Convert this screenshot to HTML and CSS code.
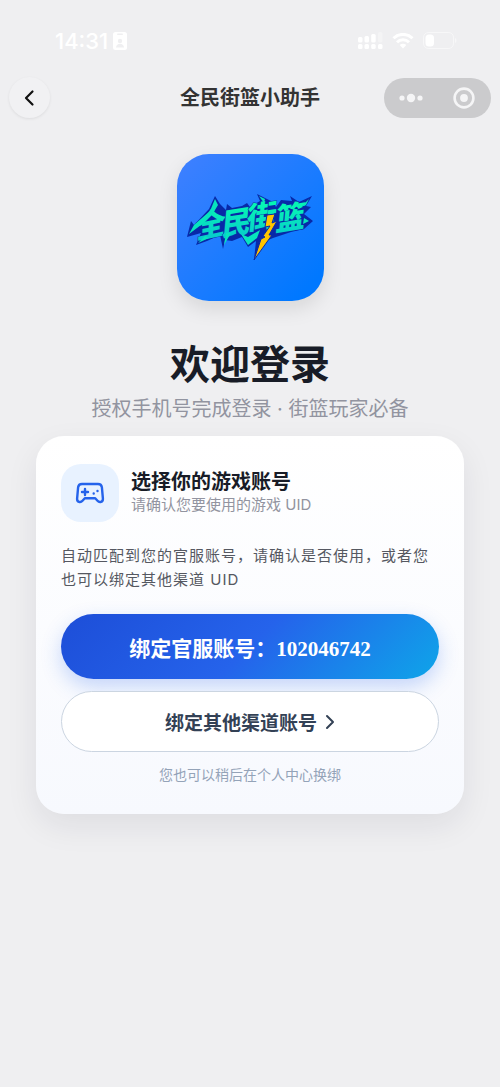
FILE: index.html
```html
<!DOCTYPE html>
<html lang="zh-CN">
<head>
    <meta charset="utf-8">
    <meta name="viewport" content="width=device-width, initial-scale=1">
    <title>全民街篮小助手</title>
    <link rel="stylesheet" href="styles.css">
</head>
<body>
    <div class="status">
        <div class="status-left">
            <span class="time">14:31</span>
            <svg width="14" height="18" viewBox="0 0 14 18">
                <rect width="14" height="18" rx="2.5" fill="#fff"/>
                <rect x="4" y="1.5" width="6" height="1.6" rx=".8" fill="#efeff1"/>
                <circle cx="7" cy="9" r="2.2" fill="#efeff1"/>
                <path d="M3 15.5c.3-5 7.700-5 8 0z" fill="#efeff1"/>
            </svg>
        </div>
        <div class="status-right">
            <svg width="25" height="17" viewBox="0 0 25 17" fill="#fff">
                <rect x="0" y="5" width="4.500" height="5.500" rx="1.500"/>
                <rect x="6.500" y="4" width="4.500" height="6.500" rx="1.500"/>
                <rect x="13.200" y="2" width="4.500" height="8.500" rx="1.500"/>
                <rect x="20" y="0" width="4.500" height="10.500" rx="1.500" opacity=".3"/>
                <rect x="0" y="12" width="4.500" height="5" rx="1.500"/>
                <rect x="6.500" y="12" width="4.500" height="5" rx="1.500"/>
                <rect x="13.200" y="12" width="4.500" height="5" rx="1.500"/>
                <rect x="20" y="12" width="4.500" height="5" rx="1.500"/>
            </svg>
            <svg width="22" height="16" viewBox="0 0 22 16" fill="none" stroke="#fff" stroke-width="3">
                <path d="M1.500 5.300a13.500 13.500 0 0 1 19 0"/>
                <path d="M5 9.200a8.500 8.500 0 0 1 12 0"/>
                <path d="M7.700 12.100a4.700 4.700 0 0 1 6.600 0L11 15.500z" fill="#fff" stroke="none"/>
            </svg>
            <svg width="34" height="17" viewBox="0 0 34 17">
                <rect x=".5" y=".5" width="30" height="16" rx="5" fill="none" stroke="#fff" stroke-opacity=".5"/>
                <rect x="2.500" y="2.500" width="8.500" height="12" rx="3.500" fill="#fff"/>
                <path d="M32 6c2 .7 2 4.300 0 5z" fill="#fff" opacity=".5"/>
            </svg>
        </div>
    </div>

    <header class="nav">
        <button class="back" type="button" aria-label="返回">
            <svg width="12" height="18" viewBox="0 0 12 18" fill="none" stroke="#111" stroke-width="2.200" stroke-linecap="round" stroke-linejoin="round">
                <path d="M8.500 2.500L2 9l6.500 6.500"/>
            </svg>
        </button>
        <h1 class="nav-title">全民街篮小助手</h1>
        <div class="capsule">
            <button type="button" aria-label="更多">
                <svg width="24" height="10" viewBox="0 0 24 10" fill="#f5f5f6">
                    <circle cx="3" cy="5" r="2.600"/>
                    <circle cx="12" cy="5" r="4.200"/>
                    <circle cx="21" cy="5" r="2.600"/>
                </svg>
            </button>
            <button type="button" aria-label="关闭">
                <svg width="22" height="22" viewBox="0 0 22 22">
                    <circle cx="11" cy="11" r="9.400" fill="none" stroke="#f5f5f6" stroke-width="2.600"/>
                    <circle cx="11" cy="11" r="3.900" fill="#f5f5f6"/>
                </svg>
            </button>
        </div>
    </header>

    <main class="page">
        <div class="logo">
            <svg viewBox="0 0 147 147" role="img" aria-label="全民街篮">
                <defs>
                    <linearGradient id="mint" x1="0" y1="0" x2="0" y2="1">
                        <stop offset=".2" stop-color="#06f5b4"/>
                        <stop offset="1" stop-color="#08c0d2"/>
                    </linearGradient>
                </defs>
                <!-- spiky shadow plate behind the name -->
                <path fill="#0829a8" d="M10 83L14 67L17 71L32 55L38 42L43 50L49 56L50 50L55 54L65 52L70 49L73 53L83 47L80 40L88 44L96 48L99 53L104 46L115 47L113 42L122 48L135 42L129 52L134 53L127 60L136 67L127 75L114 78L96 84L84 89L77 106L79 87L71 93L65 83L55 87L48 86L46 95L43 81L30 87L19 91L24 79Z"/>
                <text class="logo-text" x="19 44 69 98" y="85 82 76 77" rotate="-12 -9 -9 -9">全民街篮</text>
                <path fill="#07e5bd" d="M12 80L17 71L33 57L38 45L41 51L35 61L24 71ZM21 89L28 82L32 84ZM47 91L49 79L54 79ZM64 80L71 83L83 76L80 84L71 91ZM82 42L88 45L87 49ZM124 53L132 45L129 51ZM127 64L132 67L126 70Z"/>
                <path fill="#ffc400" stroke="#0829a8" stroke-width="1" d="M90 61L98 60L95 69L100 67L92 81L95 81L77 106L84 85L88 83L86 82L93 72L88 73Z"/>
            </svg>
        </div>
        <h2 class="welcome">欢迎登录</h2>
        <p class="slogan">授权手机号完成登录 · 街篮玩家必备</p>

        <section class="card">
            <div class="card-head">
                <div class="card-icon">
                    <svg width="30" height="24" viewBox="0 0 30 24" fill="none" stroke="#2563eb" stroke-width="2.400" stroke-linecap="round" stroke-linejoin="round">
                        <path d="M7 3h16c2.200 0 3.600 1.200 3.900 3.400l1 11.300c.2 3.200-3.400 4.300-5.400 2l-2.300-2.500H9.800l-2.300 2.500c-2 2.300-5.600 1.200-5.400-2l1-11.300C3.400 4.200 4.800 3 7 3z"/>
                        <path d="M10 8v6M7 11h6"/>
                        <path d="M18.700 12.500h.01M22.500 10h.01"/>
                    </svg>
                </div>
                <div>
                    <h3 class="card-title">选择你的游戏账号</h3>
                    <p class="card-sub">请确认您要使用的游戏 UID</p>
                </div>
            </div>
            <p class="desc">自动匹配到您的官服账号，请确认是否使用，或者您也可以绑定其他渠道 UID</p>
            <button class="btn btn-primary" type="button">绑定官服账号：<span class="uid">102046742</span></button>
            <button class="btn btn-plain" type="button">绑定其他渠道账号
                <svg width="10" height="16" viewBox="0 0 10 16" fill="none" stroke="#334155" stroke-width="2" stroke-linecap="round" stroke-linejoin="round">
                    <path d="M2 2l6 6-6 6"/>
                </svg>
            </button>
            <p class="tip">您也可以稍后在个人中心换绑</p>
        </section>
    </main>
</body>
</html>
```
FILE: styles.css
```css
* {
    margin: 0;
    padding: 0;
    box-sizing: border-box;
}
body {
    min-height: 100vh;
    background: #efeff1;
    font-family: Inter, "Noto Sans CJK SC", sans-serif;
    color: #181c27;
}
svg {
    display: block;
}
button {
    border: none;
    background: none;
    font-family: inherit;
    cursor: pointer;
}

/* status bar */
.status {
    display: flex;
    justify-content: space-between;
    align-items: center;
    height: 77px;
    padding: 4px 43px 0 55px;
}
.status-left,
.status-right {
    display: flex;
    align-items: center;
}
.status-left {
    gap: 5px;
}
.status-right {
    gap: 9px;
}
.time {
    font-size: 22px;
    font-weight: 500;
    line-height: 24px;
    color: #fff;
}

/* nav bar */
.nav {
    display: grid;
    grid-template-columns: 1fr auto 1fr;
    align-items: center;
    padding: 0 9px;
}
.back {
    display: flex;
    align-items: center;
    justify-content: center;
    width: 41px;
    height: 41px;
    border-radius: 50%;
    background: #f1f1f3;
    box-shadow: 0 1px 3px rgba(0, 0, 0, 0.08);
}
.nav-title {
    font-size: 20px;
    font-weight: 700;
    line-height: 28px;
    color: #333;
}
.capsule {
    justify-self: end;
    display: grid;
    grid-template-columns: 1fr 1fr;
    width: 107px;
    height: 40px;
    border-radius: 20px;
    background: #cbcbcd;
}
.capsule button {
    display: flex;
    align-items: center;
    justify-content: center;
}

.page {
    padding: 36px;
    text-align: center;
}
.logo {
    width: 147px;
    height: 147px;
    margin: 0 auto;
    border-radius: 32px;
    background: linear-gradient(135deg, #4080ff, #0078ff 90%);
    box-shadow: 0 8px 20px rgba(0, 0, 0, 0.1);
}
.logo-text {
    font-size: 30px;
    font-weight: 900;
    font-style: italic;
    fill: url(#mint);
    stroke: #0829a8;
    stroke-width: 1px;
    paint-order: stroke;
}
.welcome {
    margin-top: 40px;
    font-size: 40px;
    font-weight: 700;
    line-height: 48px;
}
.slogan {
    margin: 6px 0 13px;
    font-size: 20px;
    line-height: 28px;
    color: #9294a0;
}

/* account card */
.card {
    padding: 28px 25px;
    border-radius: 28px;
    background: linear-gradient(180deg, #fff, #f7f9fe);
    box-shadow: 0 12px 32px rgba(30, 20, 50, 0.08);
}
.card-head {
    display: flex;
    align-items: center;
    gap: 12px;
    text-align: left;
}
.card-icon {
    display: flex;
    align-items: center;
    justify-content: center;
    width: 58px;
    height: 58px;
    border-radius: 20px;
    background: #e8f2ff;
}
.card-title {
    font-size: 20px;
    font-weight: 700;
    line-height: 24px;
}
.card-sub {
    font-size: 15px;
    line-height: 22px;
    color: #9294a0;
}
.desc {
    margin: 22px 0;
    font-size: 15px;
    line-height: 24px;
    letter-spacing: 1px;
    text-align: left;
    color: #555861;
}
.btn {
    width: 100%;
    border-radius: 33px;
    font-weight: 700;
}
.btn-primary {
    display: block;
    height: 65px;
    font-size: 21px;
    color: #fff;
    background: linear-gradient(135deg, #1d4ed8, #2563eb 50%, #0ea5e9);
    box-shadow: 0 8px 20px rgba(37, 99, 235, 0.25);
}
.uid {
    font-family: "Liberation Serif", serif;
}
.btn-plain {
    display: flex;
    align-items: center;
    justify-content: center;
    gap: 8px;
    height: 61px;
    margin-top: 12px;
    border: 1px solid #cbd5e1;
    font-size: 19px;
    color: #334155;
    background: #fff;
}
.tip {
    margin-top: 12px;
    font-size: 14px;
    line-height: 22px;
    color: #94a3b8;
}
```
